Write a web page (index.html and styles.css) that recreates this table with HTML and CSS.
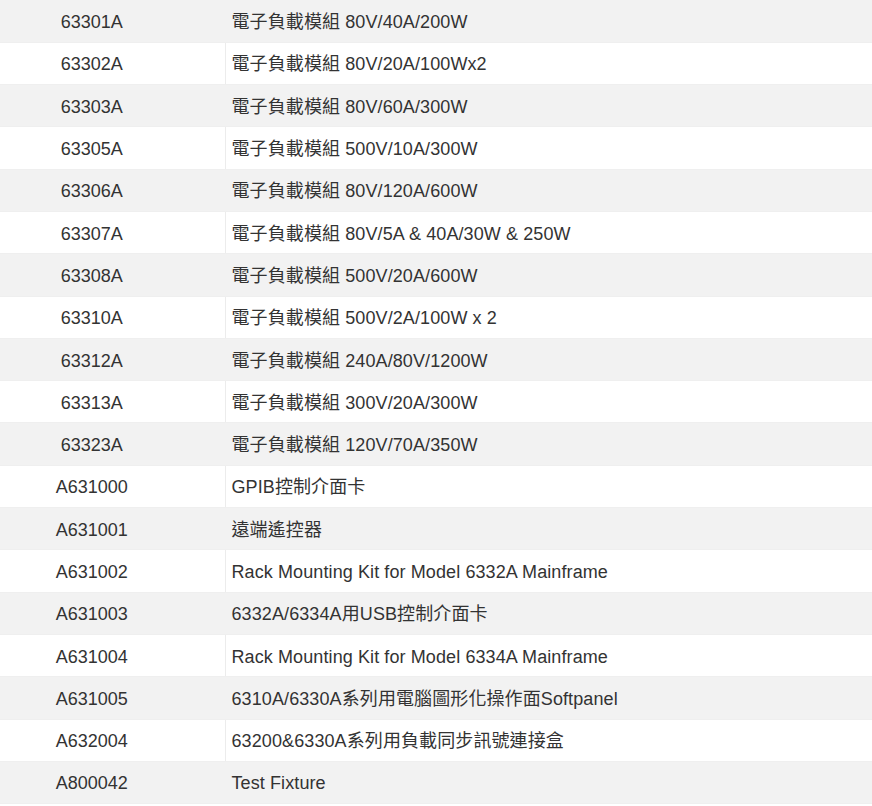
FILE: index.html
```html
<!DOCTYPE html>
<html lang="zh-Hant">
<head>
<meta charset="utf-8">
<link rel="stylesheet" href="styles.css">
</head>
<body>
<table class="spec">
<tbody>
<tr><td class="code">63301A</td><td class="desc">電子負載模組 80V/40A/200W</td></tr>
<tr><td class="code">63302A</td><td class="desc">電子負載模組 80V/20A/100Wx2</td></tr>
<tr><td class="code">63303A</td><td class="desc">電子負載模組 80V/60A/300W</td></tr>
<tr><td class="code">63305A</td><td class="desc">電子負載模組 500V/10A/300W</td></tr>
<tr><td class="code">63306A</td><td class="desc">電子負載模組 80V/120A/600W</td></tr>
<tr><td class="code">63307A</td><td class="desc">電子負載模組 80V/5A &amp; 40A/30W &amp; 250W</td></tr>
<tr><td class="code">63308A</td><td class="desc">電子負載模組 500V/20A/600W</td></tr>
<tr><td class="code">63310A</td><td class="desc">電子負載模組 500V/2A/100W x 2</td></tr>
<tr><td class="code">63312A</td><td class="desc">電子負載模組 240A/80V/1200W</td></tr>
<tr><td class="code">63313A</td><td class="desc">電子負載模組 300V/20A/300W</td></tr>
<tr><td class="code">63323A</td><td class="desc">電子負載模組 120V/70A/350W</td></tr>
<tr><td class="code">A631000</td><td class="desc">GPIB控制介面卡</td></tr>
<tr><td class="code">A631001</td><td class="desc">遠端遙控器</td></tr>
<tr><td class="code">A631002</td><td class="desc">Rack Mounting Kit for Model 6332A Mainframe</td></tr>
<tr><td class="code">A631003</td><td class="desc">6332A/6334A用USB控制介面卡</td></tr>
<tr><td class="code">A631004</td><td class="desc">Rack Mounting Kit for Model 6334A Mainframe</td></tr>
<tr><td class="code">A631005</td><td class="desc">6310A/6330A系列用電腦圖形化操作面Softpanel</td></tr>
<tr><td class="code">A632004</td><td class="desc">63200&amp;6330A系列用負載同步訊號連接盒</td></tr>
<tr><td class="code">A800042</td><td class="desc">Test Fixture</td></tr>
</tbody>
</table>
</body>
</html>
```
FILE: styles.css
```css
html, body {
  margin: 0;
  padding: 0;
  background: #fff;
}
body {
  font-family: "Liberation Sans", Arial, "Noto Sans CJK TC", sans-serif;
  font-size: 18px;
  line-height: 24px;
  color: #333;
}
.spec {
  width: 872px;
  border-collapse: collapse;
  table-layout: fixed;
}
.spec tr {
  height: 42.3px;
  background: #fff;
}
.spec tr:nth-child(odd) {
  background: #f2f2f2;
}
.spec td {
  padding: 2px 0 0 0;
  vertical-align: middle;
  border-bottom: 1px solid #efefef;
  white-space: nowrap;
}
.spec .code {
  width: 225px;
  box-sizing: border-box;
  padding-right: 41px;
  text-align: center;
  border-right: 1px solid #ececec;
}
.spec tr:nth-child(odd) .code {
  border-right-color: #f2f2f2;
}
.spec .desc {
  padding-left: 6px;
  letter-spacing: 0.1px;
  text-align: left;
}
```
